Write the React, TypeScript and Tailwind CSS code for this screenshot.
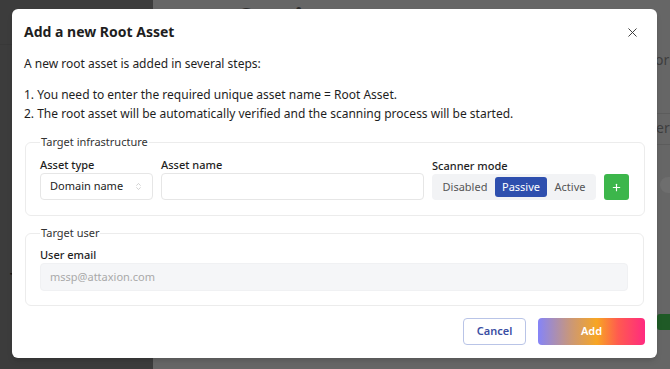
import React from 'react';
import { X, ChevronsUpDown, Plus } from 'lucide-react';

const font = { fontFamily: '"Noto Sans", "Open Sans", sans-serif' };

const Backdrop: React.FC = () => (
  <div className="flex w-[670px] h-[369px]">
    <div className="w-[153px] h-full bg-[#3c3c3c] flex flex-col">
      <div className="h-[45px] border-b border-[#383838]" />
      <div className="mt-[222px] pl-[10px] text-[14px] font-semibold text-[#151515]">T</div>
    </div>
    <div className="flex-1 h-full bg-[#666666] flex flex-col">
      <div className="pl-[85px] mt-[1px] h-[34px] text-[28px] font-bold text-[#2e2e2e] leading-[34px]">Settings</div>
      <div className="flex justify-end mt-[15px] text-[14px] text-[#3e3e3e] leading-[20px]">
        <span className="w-[15px] overflow-hidden whitespace-nowrap">ori</span>
      </div>
      <div className="mt-[43px] h-px bg-[#5c5c5c]" />
      <div className="flex justify-end mt-[4px] text-[14px] text-[#3e3e3e] leading-[20px]">
        <span className="w-[14px] overflow-hidden whitespace-nowrap">er</span>
      </div>
      <div className="mt-[6px] h-px bg-[#5c5c5c]" />
      <div className="flex justify-end mt-[32px]">
        <div className="w-[10px] h-[16px] rounded-l-full bg-[#6e6e6e]" />
      </div>
      <div className="flex justify-end mt-[121px]">
        <div className="w-[13px] h-[16px] rounded-l-[3px] bg-[#1f5a26]" />
      </div>
    </div>
  </div>
);

const App: React.FC = () => {
  return (
    <div className="relative w-[670px] h-[369px] overflow-hidden" style={font}>
      <Backdrop />

      <div className="absolute left-[12px] top-[9px] w-[645px] h-[349px] bg-white rounded-[6px] shadow-md px-3 pt-[11px] flex flex-col text-[#1e1e1e]">
        <div className="flex items-center justify-between">
          <h2 className="text-[14px] leading-[24px] font-bold">Add a new Root Asset</h2>
          <X className="w-[15px] h-[15px] mr-[5px] text-[#333]" strokeWidth={1.5} />
        </div>

        <p className="mt-[10px] text-[12px] leading-[20px]">A new root asset is added in several steps:</p>
        <ol className="mt-[11px] text-[12px] leading-[19px]">
          <li>1. You need to enter the required unique asset name = Root Asset.</li>
          <li>2. The root asset will be automatically verified and the scanning process will be started.</li>
        </ol>

        <fieldset className="mt-[10px] mx-px border border-[#ececec] rounded-[6px] pl-[14px] pr-[15px] pb-[15px]">
          <legend className="px-px text-[11px] leading-[18px] text-[#333]">Target infrastructure</legend>
          <div className="flex items-end gap-2 mt-[5px]">
            <div className="flex flex-col w-[113px]">
              <label className="text-[11px] leading-[17px] font-medium">Asset type</label>
              <div className="h-[27px] border border-[#e6e6e6] rounded-[4px] flex items-center justify-between pl-[9px] pr-[9px] text-[11px] text-[#222]">
                <span>Domain name</span>
                <ChevronsUpDown className="w-[9px] h-[9px] text-[#b0b0b0]" strokeWidth={1.5} />
              </div>
            </div>
            <div className="flex flex-col w-[263px]">
              <label className="text-[11px] leading-[17px] font-medium">Asset name</label>
              <div className="h-[27px] border border-[#e6e6e6] rounded-[4px]" />
            </div>
            <div className="flex flex-col">
              <label className="text-[11px] leading-[17px] font-medium">Scanner mode</label>
              <div className="h-[26px] w-[164px] bg-[#f2f3f5] rounded-[4px] p-[3px] flex text-[11px] text-[#555]">
                <button className="w-[60px] rounded-[3px] leading-[20px]">Disabled</button>
                <button className="w-[52px] rounded-[3px] leading-[20px] bg-[#2e4fae] text-white">Passive</button>
                <button className="w-[46px] rounded-[3px] leading-[20px]">Active</button>
              </div>
            </div>
            <button className="w-[25px] h-[26px] rounded-[3px] bg-[#3cb64b] text-white flex items-center justify-center">
              <Plus className="w-[11px] h-[11px]" strokeWidth={2.5} />
            </button>
          </div>
        </fieldset>

        <fieldset className="mt-[8px] mx-px border border-[#ececec] rounded-[6px] pl-[14px] pr-[15px] pb-[14px]">
          <legend className="px-px text-[11px] leading-[18px] text-[#333]">Target user</legend>
          <div className="flex flex-col mt-[5px]">
            <label className="text-[11px] leading-[16px] font-medium">User email</label>
            <div className="h-[28px] bg-[#f5f6f8] border border-[#f0f1f3] rounded-[4px] flex items-center pl-[9px] text-[11px] text-[#a9a9a9]">
              mssp@attaxion.com
            </div>
          </div>
        </fieldset>

        <div className="mt-[12px] flex justify-end gap-3">
          <button className="w-[63px] h-[27px] rounded-[4px] border border-[#b9c4e7] text-[#3a4ea3] text-[11px] font-semibold">
            Cancel
          </button>
          <button className="w-[107px] h-[27px] rounded-[4px] text-white text-[11px] font-semibold bg-[linear-gradient(to_right,#8584f8_0%,#c9977a_30%,#f7a623_55%,#ff5a50_75%,#ff2a80_100%)]">
            Add
          </button>
        </div>
      </div>
    </div>
  );
};

export default App;
